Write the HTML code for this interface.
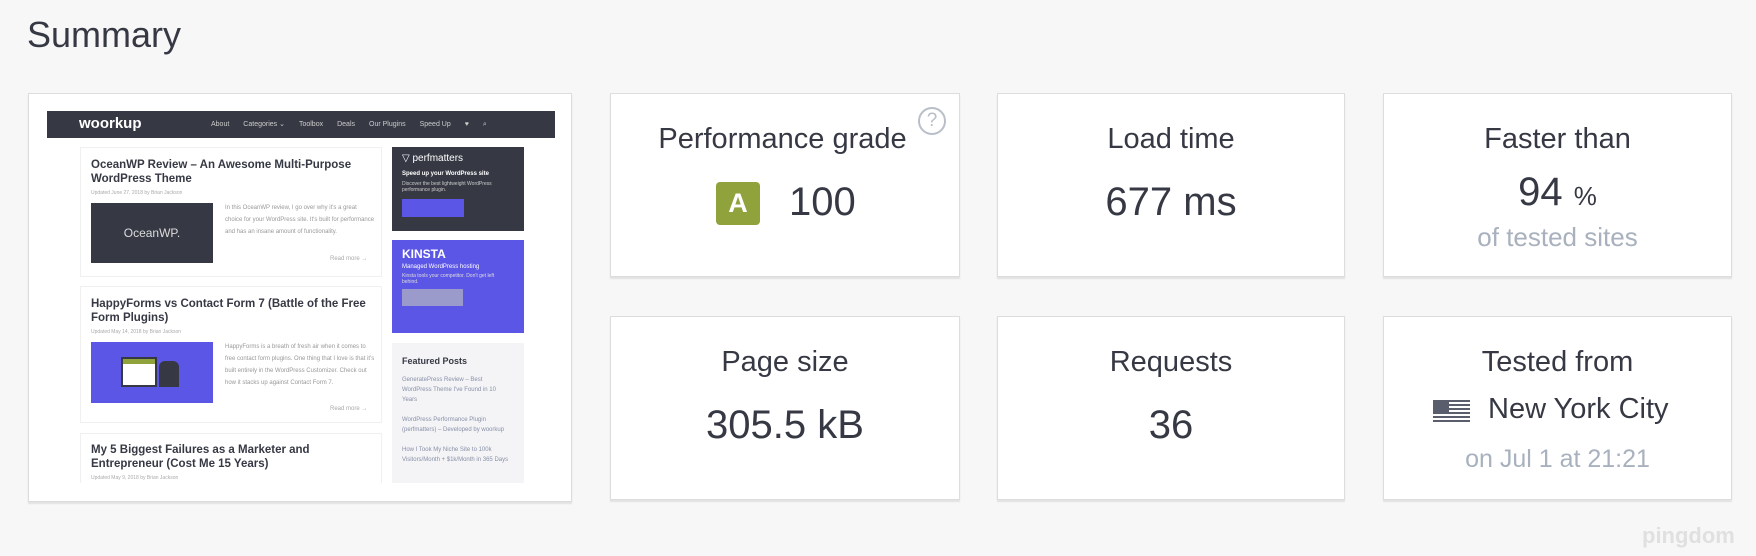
<!DOCTYPE html>
<html><head><meta charset="utf-8"><style>
*{box-sizing:border-box;margin:0;padding:0}
body{width:1756px;height:556px;background:#f7f7f7;font-family:"Liberation Sans",sans-serif;position:relative;overflow:hidden;color:#363944}
.abs{position:absolute}
h1{position:absolute;left:27px;top:14px;font-size:36px;font-weight:normal;color:#363944}
.card{position:absolute;background:#fff;border:1px solid #ddd;box-shadow:0 2px 1px #e2e2e2}
.t{position:absolute;left:0;right:0;text-align:center;font-size:29px;color:#363944;white-space:nowrap}
.v{position:absolute;left:0;right:0;text-align:center;font-size:40px;color:#363944;white-space:nowrap}
.g{color:#a8b1bd}
.th *{position:absolute}
.tt{font-size:11.5px;font-weight:bold;color:#363944;line-height:14px}
.sm{font-size:5px;color:#aaa}
.tx{font-size:6px;color:#999;line-height:12px}
.nav span{position:static;margin-right:14px}
</style></head><body>
<h1>Summary</h1>

<div class="card" style="left:28px;top:93px;width:544px;height:409px">
 <div class="th abs" style="left:18px;top:17px;width:508px;height:372px;background:#fff;overflow:hidden">
  <div style="left:0;top:0;width:508px;height:27px;background:#363944"></div>
  <div style="left:32px;top:4px;color:#fff;font-size:15px;font-weight:bold">woorkup</div>
  <div class="nav" style="left:164px;top:9px;color:#ccc;font-size:7px;white-space:nowrap"><span>About</span><span>Categories ⌄</span><span>Toolbox</span><span>Deals</span><span>Our Plugins</span><span>Speed Up</span><span>♥</span><span>⌕</span></div>
  <div style="left:33px;top:36px;width:302px;height:130px;border:1px solid #f0f0f0"></div>
  <div class="tt" style="left:44px;top:47px;width:290px">OceanWP Review – An Awesome Multi-Purpose WordPress Theme</div>
  <div class="sm" style="left:44px;top:79px">Updated June 27, 2018 by Brian Jackson</div>
  <div style="left:44px;top:92px;width:122px;height:60px;background:#363944;color:#ddd;font-size:12px;text-align:center;line-height:60px">OceanWP.</div>
  <div class="tx" style="left:178px;top:91px;width:150px">In this OceanWP review, I go over why it's a great choice for your WordPress site. It's built for performance and has an insane amount of functionality.</div>
  <div class="sm" style="left:283px;top:145px;font-size:6px">Read more →</div>
  <div style="left:33px;top:175px;width:302px;height:137px;border:1px solid #f0f0f0"></div>
  <div class="tt" style="left:44px;top:186px;width:290px">HappyForms vs Contact Form 7 (Battle of the Free Form Plugins)</div>
  <div class="sm" style="left:44px;top:218px">Updated May 14, 2018 by Brian Jackson</div>
  <div style="left:44px;top:231px;width:122px;height:61px;background:#5c56e6"></div>
  <div style="left:74px;top:246px;width:36px;height:30px;background:#fff;border:2px solid #363944"></div>
  <div style="left:76px;top:248px;width:32px;height:5px;background:#8fa23c"></div>
  <div style="left:112px;top:250px;width:20px;height:26px;background:#363944;border-radius:6px 6px 0 0"></div>
  <div class="tx" style="left:178px;top:230px;width:150px">HappyForms is a breath of fresh air when it comes to free contact form plugins. One thing that I love is that it's built entirely in the WordPress Customizer. Check out how it stacks up against Contact Form 7.</div>
  <div class="sm" style="left:283px;top:295px;font-size:6px">Read more →</div>
  <div style="left:33px;top:322px;width:302px;height:60px;border:1px solid #f0f0f0"></div>
  <div class="tt" style="left:44px;top:332px;width:290px">My 5 Biggest Failures as a Marketer and Entrepreneur (Cost Me 15 Years)</div>
  <div class="sm" style="left:44px;top:364px">Updated May 9, 2018 by Brian Jackson</div>
  <div style="left:345px;top:36px;width:132px;height:84px;background:#363944"></div>
  <div style="left:355px;top:42px;color:#fff;font-size:10px">▽ perfmatters</div>
  <div style="left:355px;top:60px;color:#fff;font-size:6px;font-weight:bold">Speed up your WordPress site</div>
  <div style="left:355px;top:70px;color:#ccc;font-size:5px;width:110px">Discover the best lightweight WordPress performance plugin.</div>
  <div style="left:355px;top:88px;width:62px;height:18px;background:#5c56e6"></div>
  <div style="left:345px;top:129px;width:132px;height:93px;background:#5c56e6"></div>
  <div style="left:355px;top:136px;color:#fff;font-size:12px;font-weight:bold">KINSTA</div>
  <div style="left:355px;top:153px;color:#fff;font-size:6px">Managed WordPress hosting</div>
  <div style="left:355px;top:162px;color:#ddd;font-size:5px;width:100px">Kinsta tools your competitor. Don't get left behind.</div>
  <div style="left:355px;top:178px;width:61px;height:17px;background:#9a9acb"></div>
  <div style="left:345px;top:232px;width:132px;height:140px;background:#f4f4f6"></div>
  <div style="left:355px;top:245px;font-size:9px;font-weight:bold">Featured Posts</div>
  <div class="tx" style="left:355px;top:264px;width:110px;line-height:10px;color:#8890a8">GeneratePress Review – Best WordPress Theme I've Found in 10 Years<br><br>WordPress Performance Plugin (perfmatters) – Developed by woorkup<br><br>How I Took My Niche Site to 100k Visitors/Month + $1k/Month in 365 Days</div>
 </div>
</div>

<div class="card" style="left:610px;top:93px;width:350px;height:184px">
 <div class="t" style="top:29px;left:-5px">Performance grade</div>
 <div class="abs" style="left:307px;top:13px;width:28px;height:28px;border:2px solid #b8bfc8;border-radius:50%;color:#b8bfc8;font-size:19px;text-align:center;line-height:24px">?</div>
 <div class="abs" style="left:105px;top:88px;width:44px;height:43px;background:#8fa23c;border-radius:4px;color:#fff;font-size:27px;font-weight:bold;text-align:center;line-height:43px">A</div>
 <div class="abs" style="left:178px;top:86px;font-size:40px">100</div>
</div>
<div class="card" style="left:997px;top:93px;width:348px;height:184px">
 <div class="t" style="top:29px">Load time</div>
 <div class="v" style="top:86px">677 ms</div>
</div>
<div class="card" style="left:1383px;top:93px;width:349px;height:184px">
 <div class="t" style="top:29px">Faster than</div>
 <div class="v" style="top:76px">94 <span style="font-size:26px">%</span></div>
 <div class="t g" style="top:128px;font-size:26px">of tested sites</div>
</div>

<div class="card" style="left:610px;top:316px;width:350px;height:184px">
 <div class="t" style="top:29px">Page size</div>
 <div class="v" style="top:86px">305.5 kB</div>
</div>
<div class="card" style="left:997px;top:316px;width:348px;height:184px">
 <div class="t" style="top:29px">Requests</div>
 <div class="v" style="top:86px">36</div>
</div>
<div class="card" style="left:1383px;top:316px;width:349px;height:184px">
 <div class="t" style="top:29px">Tested from</div>
 <div class="abs" style="left:49px;top:83px;width:37px;height:23px;background:repeating-linear-gradient(#5a5e6c 0 2px,#fff 2px 4px)"></div>
 <div class="abs" style="left:49px;top:83px;width:16px;height:12px;background:#5a5e6c"></div>
 <div class="abs" style="left:104px;top:76px;font-size:29px">New York City</div>
 <div class="t g" style="top:128px;font-size:25px">on Jul 1 at 21:21</div>
</div>

<div class="abs" style="left:1642px;top:523px;font-size:22px;font-weight:bold;color:#e0e0e0">pingdom</div>
</body></html>
